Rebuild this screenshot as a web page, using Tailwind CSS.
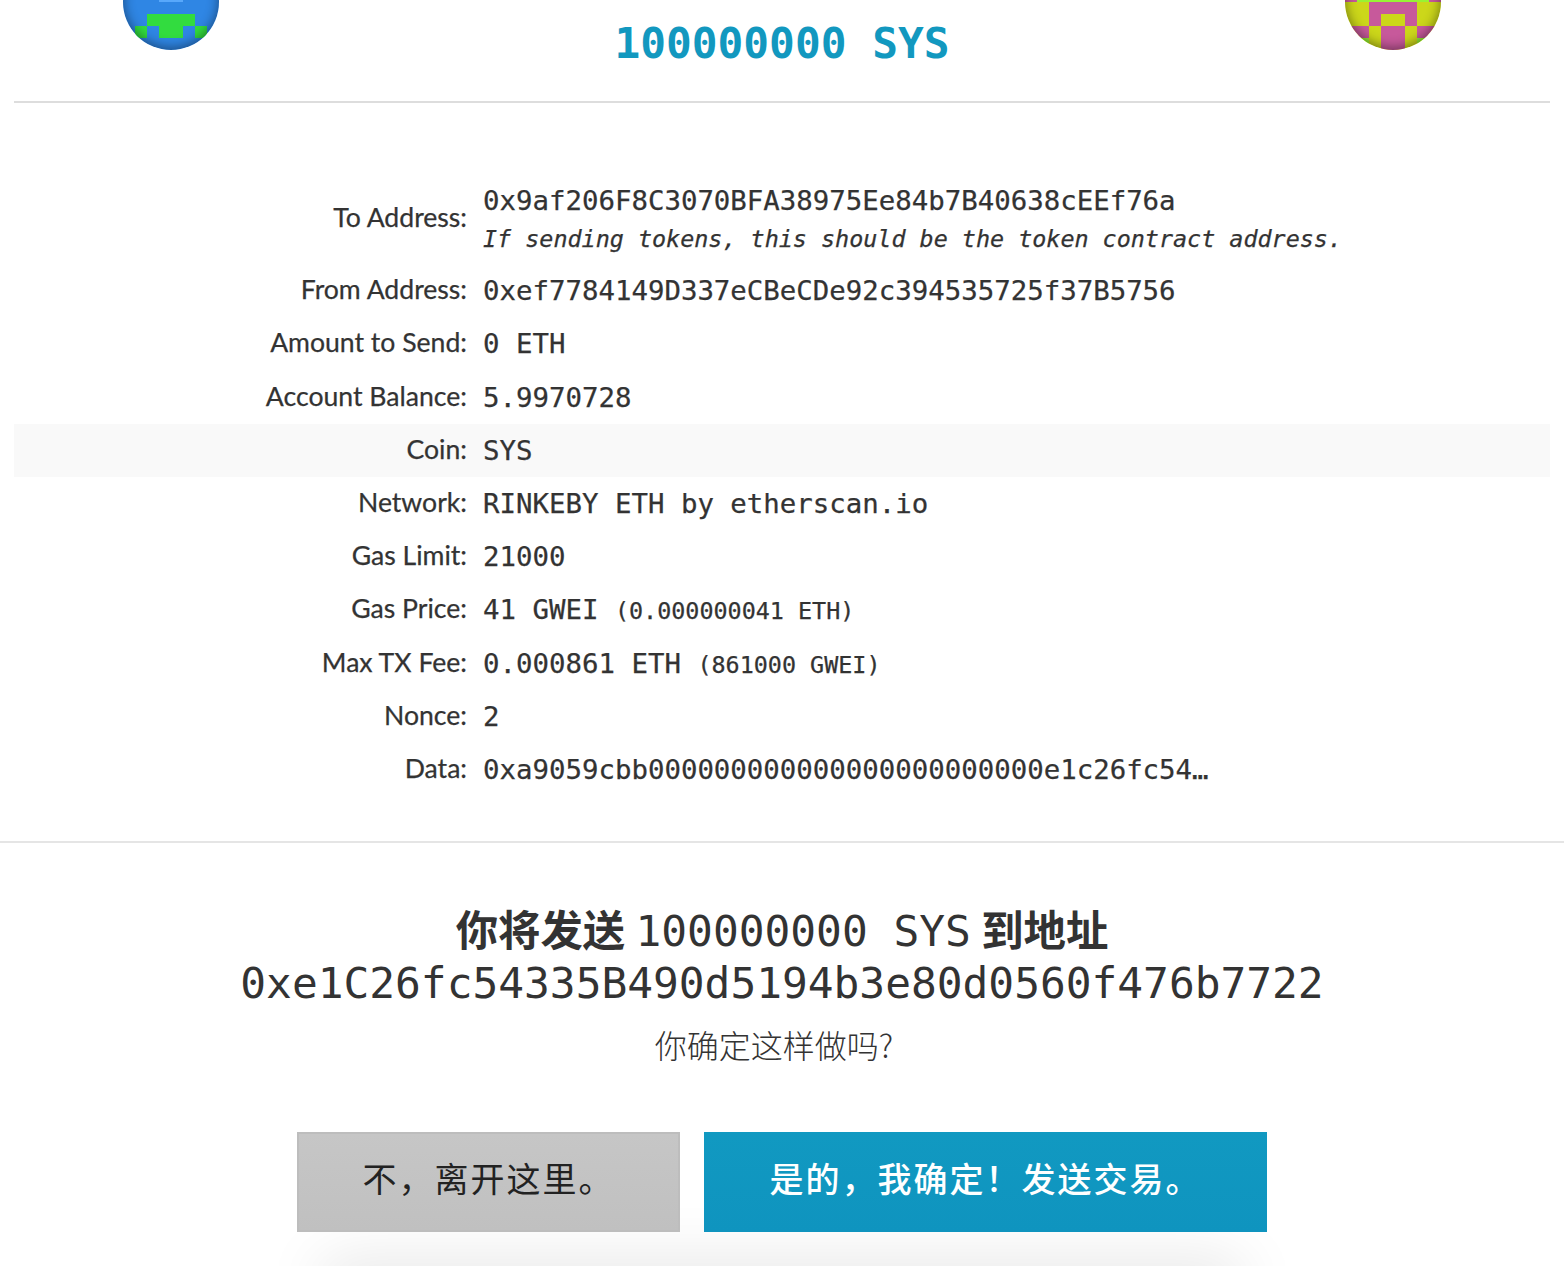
<!DOCTYPE html>
<html lang="zh-CN">
  <head>
    <meta charset="UTF-8" />
    <meta name="viewport" content="width=device-width, initial-scale=1.0" />
    <title>发送交易</title>
    <script src="https://cdn.jsdelivr.net/npm/@tailwindcss/browser@4"></script>
  </head>
  <body class="h-[1266px] overflow-hidden bg-white text-[#333] font-['Lato','Noto_Sans_CJK_SC',sans-serif]">
    <!-- sender / amount / recipient -->
    <header class="mx-[14px] h-[103px] flex justify-between items-start px-[109px] border-b-2 border-[#ddd]">
      <div class="relative w-24 h-24 -mt-[46px] rounded-full overflow-hidden">
        <svg class="block w-24 h-24" viewBox="0 0 8 8" shape-rendering="crispEdges">
          <rect width="8" height="8" fill="#2f86e4" />
          <path fill="#58a8fb" d="M3 3h2v1H3z" />
          <path fill="#32dc3f" d="M2 5h4v1H2zM1 6h1v1H1zM3 6h2v1H3zM6 6h1v1H6z" />
        </svg>
        <div class="absolute inset-0 rounded-full shadow-[inset_0_-2px_12px_rgba(0,0,0,0.45)]"></div>
      </div>
      <h4 class="mt-[18px] text-[42.8px] leading-[50px] font-bold text-[#1298bf] font-['DejaVu_Sans_Mono',monospace]">100000000 SYS</h4>
      <div class="relative w-24 h-24 -mt-[46px] rounded-full overflow-hidden">
        <svg class="block w-24 h-24" viewBox="0 0 8 8" shape-rendering="crispEdges">
          <rect width="8" height="8" fill="#ccd71a" />
          <path fill="#98f235" d="M1 3h6v1H1zM0 7h2v1H0zM6 7h2v1H6z" />
          <path fill="#c7599b" d="M0 3h1v1H0zM7 3h1v1H7zM2 4h4v1H2zM2 5h1v1H2zM5 5h1v1H5zM0 6h2v1H0zM3 6h2v2H3zM6 6h2v1H6z" />
        </svg>
        <div class="absolute inset-0 rounded-full shadow-[inset_0_-2px_12px_rgba(0,0,0,0.45)]"></div>
      </div>
    </header>

    <!-- transaction details -->
    <section class="h-[740px] border-b-2 border-[#e5e5e5] px-[14px] pt-[71px]">
      <table class="w-full table-fixed text-[27.4px] leading-[37px]">
        <colgroup>
          <col class="w-[461px]" />
          <col />
        </colgroup>
        <tbody class="[&_td]:px-2 [&_td:first-child]:text-right [&_td:first-child]:pb-[2px] [&_td:first-child]:text-[26.6px] [&_td:last-child]:font-['DejaVu_Sans_Mono',monospace] [&_td]:[-webkit-text-stroke:0.25px_#333] whitespace-nowrap">
          <tr class="h-[90px]">
            <td><div class="pb-[2px]">To Address:</div></td>
            <td>
              <div class="pt-[2px]">
                0x9af206F8C3070BFA38975Ee84b7B40638cEEf76a<br />
                <em class="text-[23.4px]">If sending tokens, this should be the token contract address.</em>
              </div>
            </td>
          </tr>
          <tr class="h-[53px]">
            <td>From Address:</td>
            <td>0xef7784149D337eCBeCDe92c394535725f37B5756</td>
          </tr>
          <tr class="h-[53px]">
            <td>Amount to Send:</td>
            <td>0 ETH</td>
          </tr>
          <tr class="h-[54px]">
            <td>Account Balance:</td>
            <td>5.9970728</td>
          </tr>
          <tr class="h-[53px] bg-[#f9f9f9]">
            <td>Coin:</td>
            <td>SYS</td>
          </tr>
          <tr class="h-[53px]">
            <td>Network:</td>
            <td>RINKEBY ETH by etherscan.io</td>
          </tr>
          <tr class="h-[53px]">
            <td>Gas Limit:</td>
            <td>21000</td>
          </tr>
          <tr class="h-[53px]">
            <td>Gas Price:</td>
            <td><div class="pt-[2px]">41 GWEI <small class="text-[23.4px]">(0.000000041 ETH)</small></div></td>
          </tr>
          <tr class="h-[54px]">
            <td>Max TX Fee:</td>
            <td><div class="pt-[2px]">0.000861 ETH <small class="text-[23.4px]">(861000 GWEI)</small></div></td>
          </tr>
          <tr class="h-[53px]">
            <td>Nonce:</td>
            <td>2</td>
          </tr>
          <tr class="h-[53px]">
            <td>Data:</td>
            <td>0xa9059cbb000000000000000000000000e1c26fc54…</td>
          </tr>
        </tbody>
      </table>
    </section>

    <!-- confirmation -->
    <section class="relative h-[423px] pt-[61px] text-center">
      <h4 class="text-[42.4px] leading-[52px] font-bold whitespace-nowrap">
        你将发送
        <span class="font-normal text-[42.85px] font-['DejaVu_Sans_Mono',monospace]">100000000 SYS</span>
        到地址
        <span class="block font-normal text-[42.85px] font-['DejaVu_Sans_Mono',monospace]">0xe1C26fc54335B490d5194b3e80d0560f476b7722</span>
      </h4>
      <p class="mt-[13px] pr-[16px] text-[32px] leading-[44px] font-light font-['Noto_Sans_CJK_SC',sans-serif]">你确定这样做吗?</p>
      <div class="relative z-10 mt-[66px] flex justify-center gap-6 text-[34px] tracking-[2px] font-['Noto_Sans_CJK_SC',sans-serif]">
        <button class="w-[383px] h-[100px] pb-[9px] bg-linear-to-b from-[#c6c6c6] to-[#c0c0c0] border-2 border-[#bdbdbd] text-[#222]">不，离开这里。</button>
        <button class="w-[563px] h-[100px] pb-[9px] bg-linear-to-b from-[#1199c1] to-[#0f94bf] text-white font-medium">是的，我确定！发送交易。</button>
      </div>
      <div class="absolute left-[338px] right-[338px] top-[433px] h-5 shadow-[0_0_60px_16px_rgba(0,0,0,0.1)]"></div>
    </section>
  </body>
</html>
